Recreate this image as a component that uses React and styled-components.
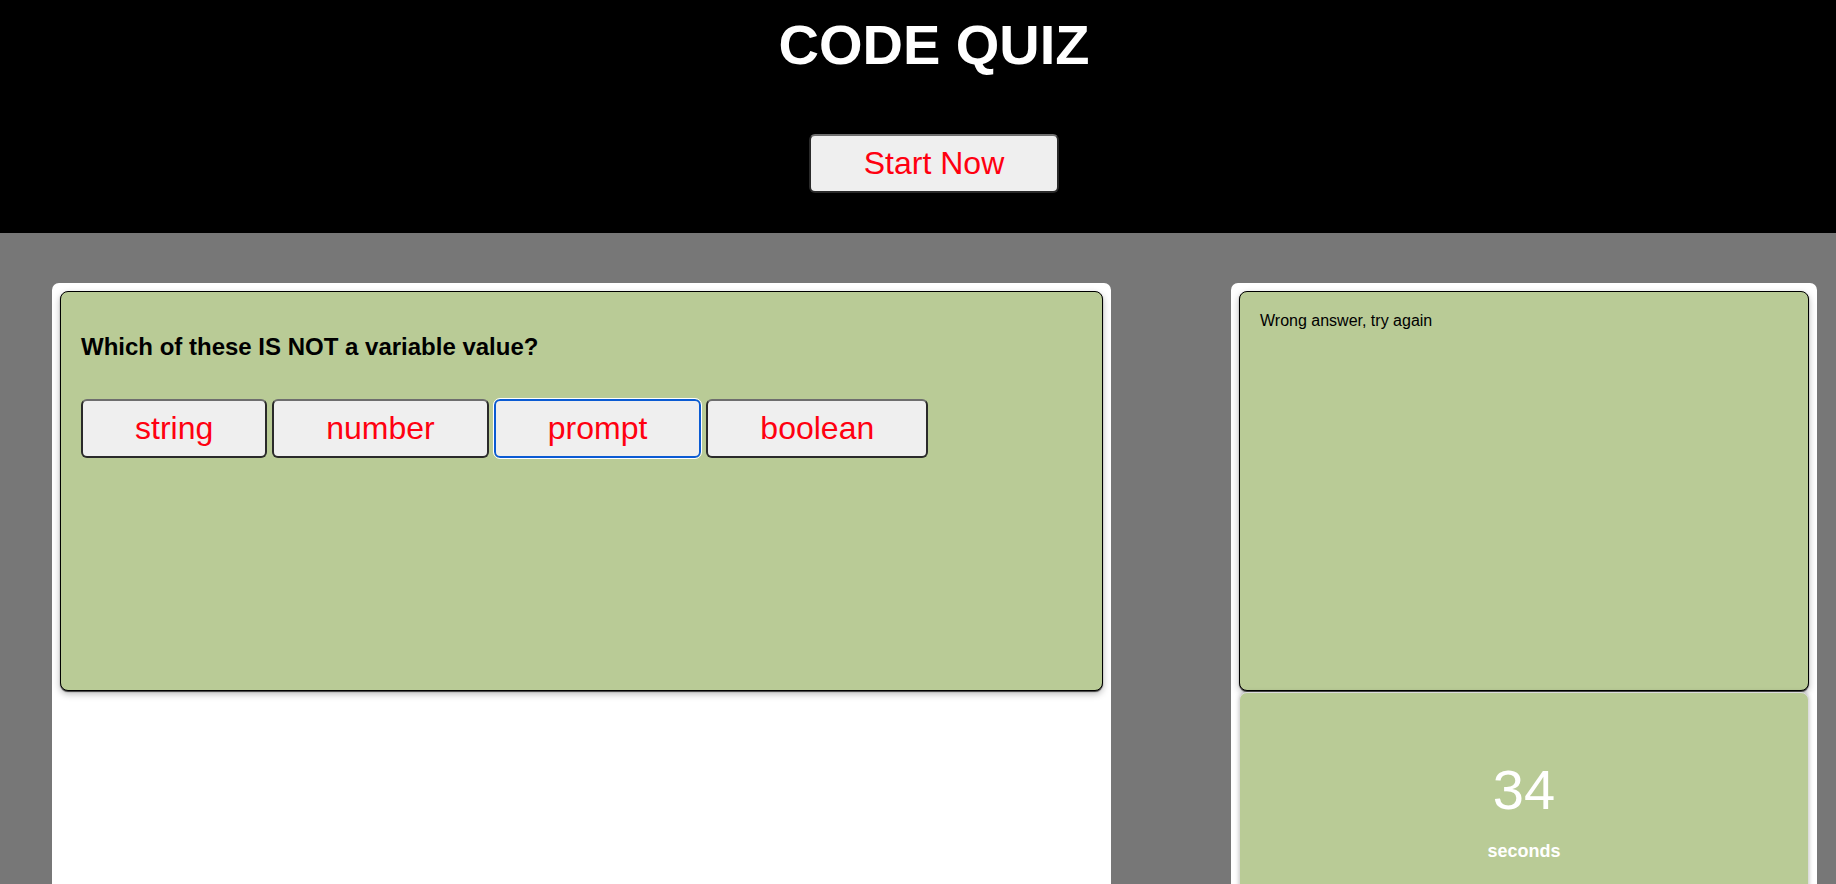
import React, { useState } from 'react';
import styled, { createGlobalStyle } from 'styled-components';

const GlobalStyle = createGlobalStyle`
  html, body {
    margin: 0;
    padding: 0;
    overflow: hidden;
    font-family: "Liberation Sans", Arial, sans-serif;
  }
`;

const Page = styled.div`
  height: 100vh;
  overflow: hidden;
  background: #777777;
`;

const Header = styled.header`
  height: 233px;
  box-sizing: border-box;
  background: #000;
  padding: 12px 0 0 32px;
  display: flex;
  flex-direction: column;
  align-items: center;
`;

const Title = styled.h1`
  margin: 0;
  color: #fff;
  font-size: 56px;
  font-weight: bold;
`;

const Button = styled.button`
  font-family: "Liberation Sans", Arial, sans-serif;
  font-size: 32px;
  color: #ff0010;
  background: #efefef;
  padding: 9px 52px;
  border: 2px solid #2a2a2a;
  border-top-color: #6e6e6e;
  border-radius: 6px;
  cursor: pointer;
  line-height: normal;
  ${(p) =>
    p.$focused &&
    `
    border-color: #0b5bd3;
    outline: 1px solid #fff;
  `}
`;

const StartButton = styled(Button)`
  margin-top: 57px;
  padding: 9px 53px;
`;

const Main = styled.main`
  display: flex;
  align-items: flex-start;
  gap: 120px;
  padding: 50px 19px 0 52px;
`;

const Card = styled.section`
  width: ${(p) => p.$width}px;
  height: 700px;
  box-sizing: border-box;
  background: #fff;
  border-radius: 7px;
  padding: 8px;
  display: flex;
  flex-direction: column;
  gap: 1px;
`;

const Panel = styled.div`
  height: 400px;
  box-sizing: border-box;
  background: #b9cb96;
  border: 1px solid #000;
  border-radius: 8px;
  box-shadow: 0 1px 1px rgba(0, 0, 0, 0.7), 0 3px 7px rgba(0, 0, 0, 0.28);
  padding: 20px;
`;

const Question = styled.h2`
  margin: 21px 0 0;
  font-size: 24px;
  font-weight: bold;
  color: #000;
`;

const Choices = styled.div`
  display: flex;
  gap: 5px;
  margin-top: 38px;
`;

const Feedback = styled.p`
  margin: 0;
  font-size: 16px;
  color: #000;
`;

const TimerPanel = styled.div`
  flex: 1;
  background: #b9cb96;
  border: 1px solid #dcdcdc;
  border-radius: 8px;
  box-shadow: 0 0 4px rgba(0, 0, 0, 0.25);
  padding-top: 64px;
  display: flex;
  flex-direction: column;
  align-items: center;
  color: #fff;
`;

const Count = styled.div`
  font-size: 56px;
`;

const Unit = styled.div`
  margin-top: 19px;
  font-size: 18px;
  font-weight: bold;
`;

const choices = ['string', 'number', 'prompt', 'boolean'];

export default function App() {
  const [seconds] = useState(34);

  return (
    <Page>
      <GlobalStyle />
      <Header>
        <Title>CODE QUIZ</Title>
        <StartButton>Start Now</StartButton>
      </Header>
      <Main>
        <Card $width={1059}>
          <Panel>
            <Question>Which of these IS NOT a variable value?</Question>
            <Choices>
              {choices.map((c) => (
                <Button key={c} $focused={c === 'prompt'}>
                  {c}
                </Button>
              ))}
            </Choices>
          </Panel>
        </Card>
        <Card $width={586}>
          <Panel>
            <Feedback>Wrong answer, try again</Feedback>
          </Panel>
          <TimerPanel>
            <Count>{seconds}</Count>
            <Unit>seconds</Unit>
          </TimerPanel>
        </Card>
      </Main>
    </Page>
  );
}
